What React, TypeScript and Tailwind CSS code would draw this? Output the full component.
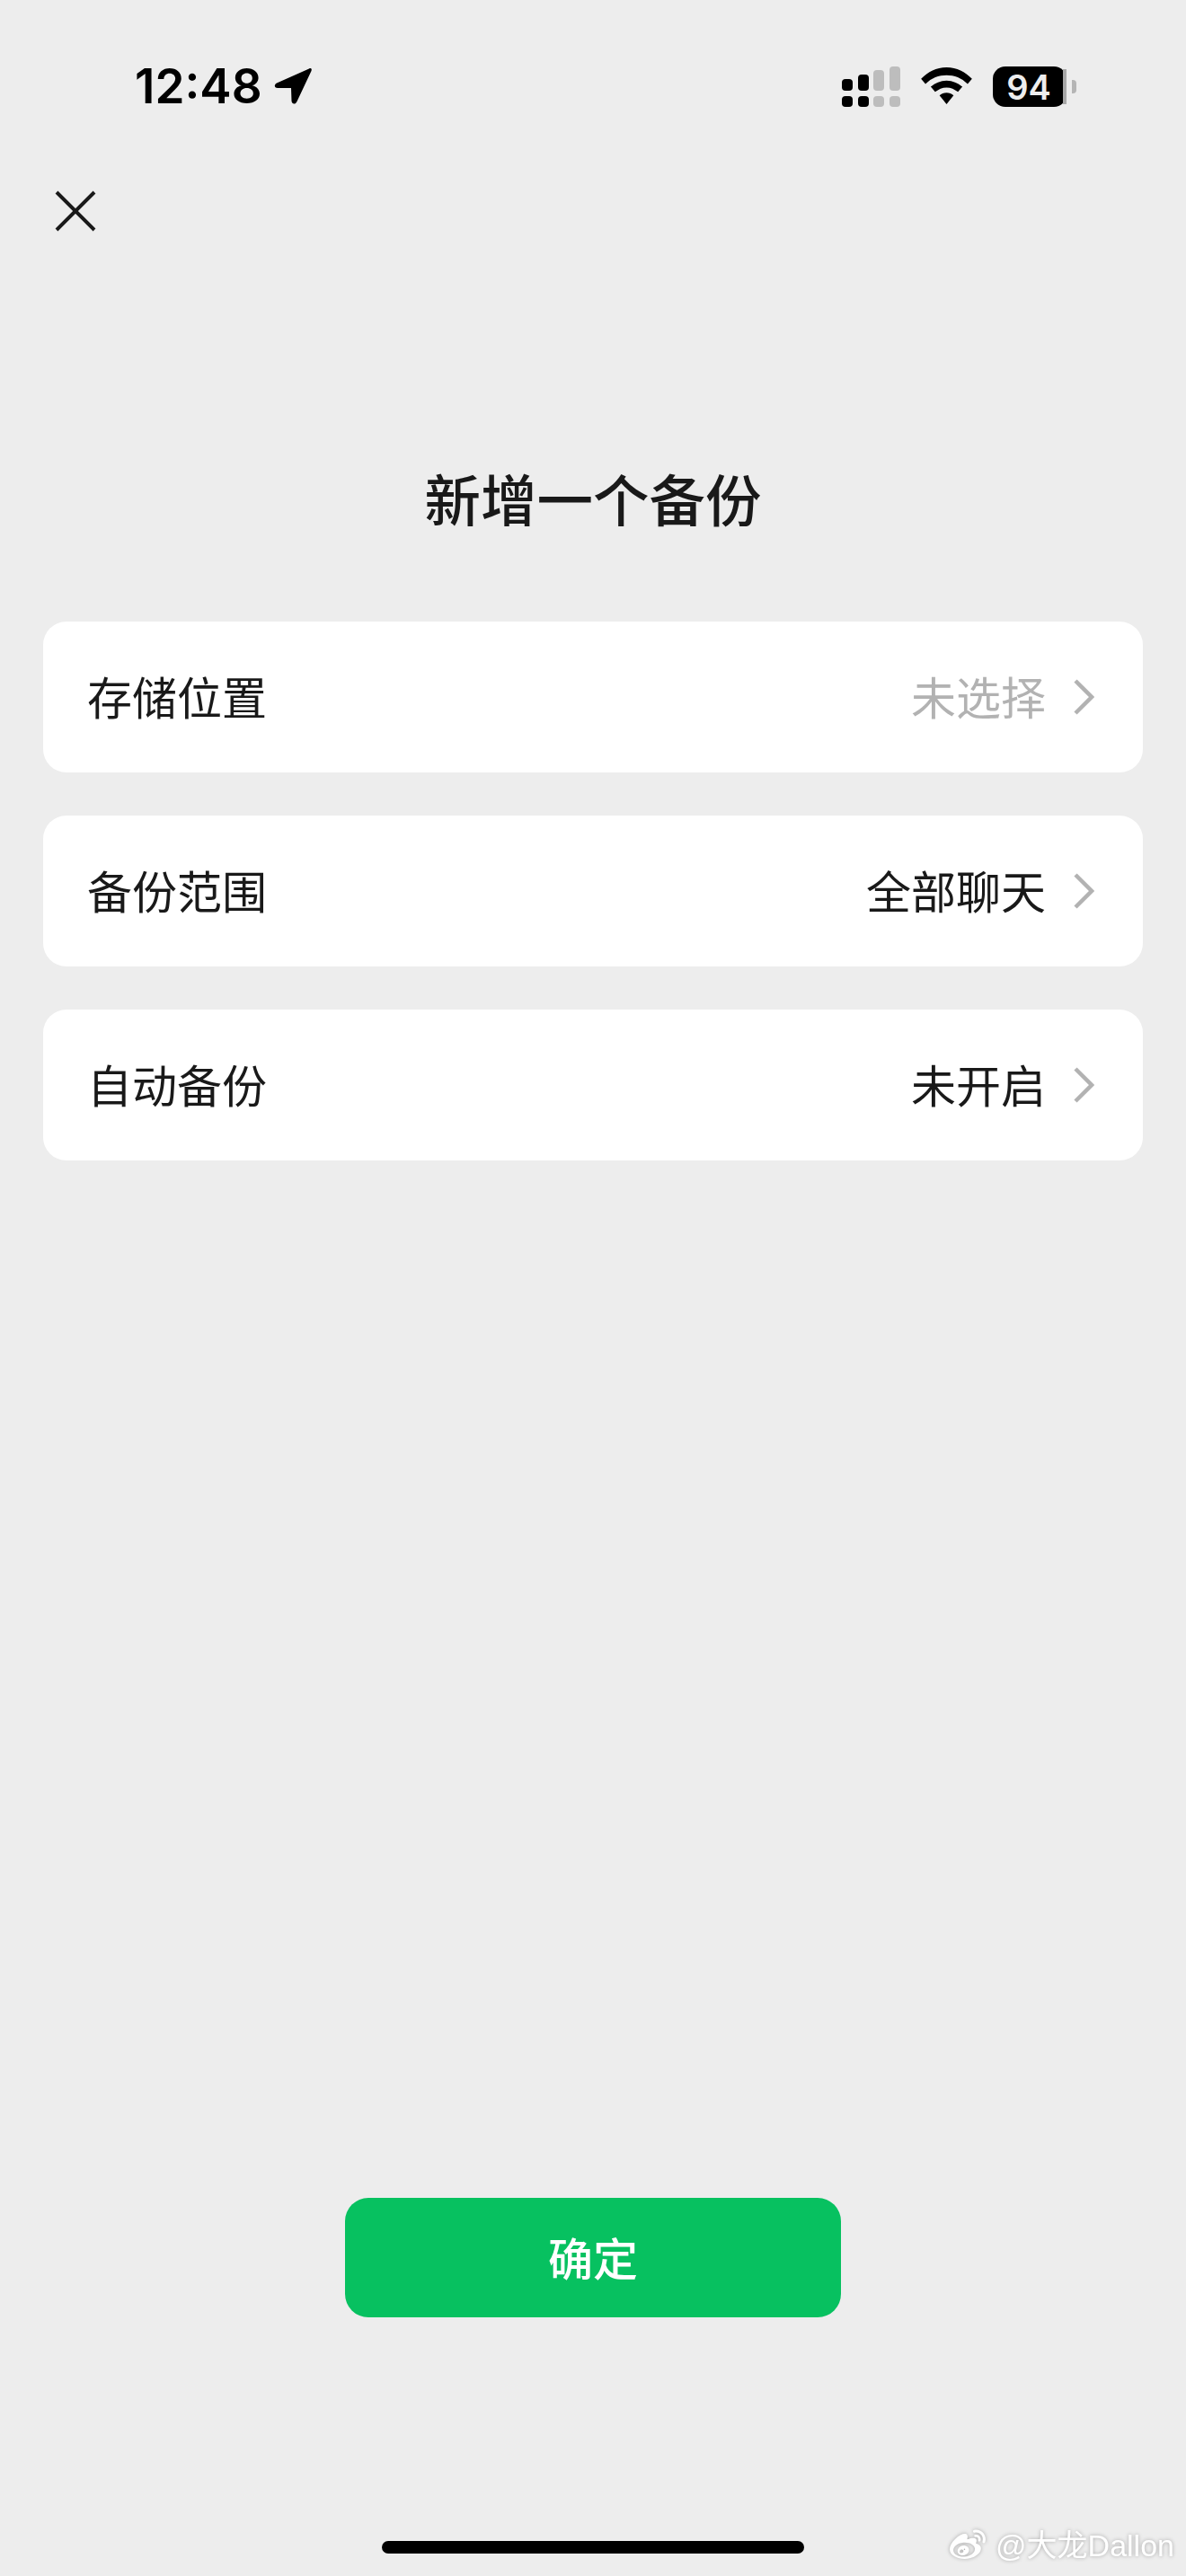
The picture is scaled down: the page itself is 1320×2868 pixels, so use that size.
import { FaWeibo } from "react-icons/fa";

const cjk = "font-['Noto_Sans_CJK_SC','Noto_Sans',sans-serif]";

const rows = [
  { label: "存储位置", value: "未选择", muted: true },
  { label: "备份范围", value: "全部聊天", muted: false },
  { label: "自动备份", value: "未开启", muted: false },
];

function Chevron() {
  return (
    <svg width="24" height="40" viewBox="0 0 24 40" fill="none" className="ml-[30px]">
      <path d="M3 2 L21 20 L3 38" stroke="#b2b2b2" strokeWidth="4.5" />
    </svg>
  );
}

function StatusBar() {
  return (
    <div className="flex h-[120px] items-end justify-between pb-[1px] pl-[150px] pr-[122px]">
      <div className="flex items-center gap-[12px]">
        <span className="font-['Inter',sans-serif] text-[53px] leading-[46px] font-semibold text-black">12:48</span>
        <svg width="44" height="42" viewBox="0 0 44 42" fill="black">
          <path d="M40 1.5 L4 17.5 C0.5 19.5 1.5 23 5 23 L20 23 L20.5 37.5 C21 41.5 25 41.5 26.5 38 L42.5 4 C43.5 1.5 42 0.5 40 1.5 Z" />
        </svg>
      </div>
      <div className="flex items-center">
        <svg width="65" height="45" viewBox="0 0 65 45">
          <rect x="0" y="14" width="12" height="13" rx="4" fill="black" />
          <rect x="18" y="9" width="12" height="18" rx="4" fill="black" />
          <rect x="35" y="4" width="12" height="23" rx="4" fill="#bdbdbd" />
          <rect x="53" y="0" width="12" height="27" rx="4" fill="#bdbdbd" />
          <rect x="0" y="33" width="12" height="12" rx="4" fill="black" />
          <rect x="18" y="33" width="12" height="12" rx="4" fill="black" />
          <rect x="35" y="33" width="12" height="12" rx="4" fill="#bdbdbd" />
          <rect x="53" y="33" width="12" height="12" rx="4" fill="#bdbdbd" />
        </svg>
        <svg width="57" height="43" viewBox="0 0 58 44" className="ml-[23px]" fill="black">
          <path d="M29 0 C41 0 50 5 58 13 L53 19 C46 12 38 9 29 9 C20 9 12 12 5 19 L0 13 C8 5 17 0 29 0 Z" />
          <path d="M29 15 C36 15 42 18 47 22 L42 28 C38 25 34 23 29 23 C24 23 20 25 16 28 L11 22 C16 18 22 15 29 15 Z" />
          <path d="M29 29 C32 29 35 30 37 32 L29 42 L21 32 C23 30 26 29 29 29 Z" />
        </svg>
        <div className="relative ml-[23px] flex h-[45px] w-[82px] items-center justify-center rounded-[14px] bg-black pr-[2px]">
          <span className="font-['Inter',sans-serif] text-[38px] leading-none font-semibold text-[#ededed]">94</span>
          <div className="absolute top-[3px] right-0 bottom-[3px] w-[4px] bg-[#a8a8a8]" />
        </div>
        <div className="ml-[6px] h-[15px] w-[5px] rounded-r-[4px] bg-[#b5b5b5]" />
      </div>
    </div>
  );
}

export default function App() {
  return (
    <div className={`relative flex h-[2868px] w-[1320px] flex-col overflow-hidden bg-[#ededed] ${cjk}`}>
      <StatusBar />

      <div className="mt-[91px] pl-[60px]">
        <svg width="48" height="48" viewBox="0 0 48 48" fill="none">
          <path d="M3 3 L45 45 M45 3 L3 45" stroke="#191919" strokeWidth="4" />
        </svg>
      </div>

      <h1 className="mt-[252px] h-[88px] text-center text-[62.5px] leading-[86px] font-medium text-[#191919]">新增一个备份</h1>

      <div className="mt-[93px] flex flex-col gap-[48px] px-[48px]">
        {rows.map((row) => (
          <div key={row.label} className="flex h-[168px] items-center justify-between rounded-[26px] bg-white pr-[54px] pl-[49px]">
            <span className="pb-[5px] text-[50px] leading-none text-[#191919]">{row.label}</span>
            <div className="flex items-center">
              <span className={`pb-[5px] text-[50px] leading-none ${row.muted ? "text-[#b2b2b2]" : "text-[#191919]"}`}>{row.value}</span>
              <Chevron />
            </div>
          </div>
        ))}
      </div>

      <div className="flex-1" />

      <button className="mx-auto flex h-[133px] w-[552px] items-center justify-center rounded-[26px] bg-[#07c160] pb-[2px] text-[50px] font-medium text-white">确定</button>

      <div className="mx-auto mt-[249px] mb-[25px] h-[14px] w-[470px] rounded-full bg-black" />

      <div className="absolute right-[13px] bottom-[14px] flex items-center gap-[8px] text-white [filter:drop-shadow(0_0_2px_rgba(0,0,0,0.3))]">
        <FaWeibo className="h-[40px] w-[46px]" />
        <span className="font-['Liberation_Sans','Noto_Sans_CJK_SC',sans-serif] text-[34px] leading-none">@大龙Dallon</span>
      </div>
    </div>
  );
}
